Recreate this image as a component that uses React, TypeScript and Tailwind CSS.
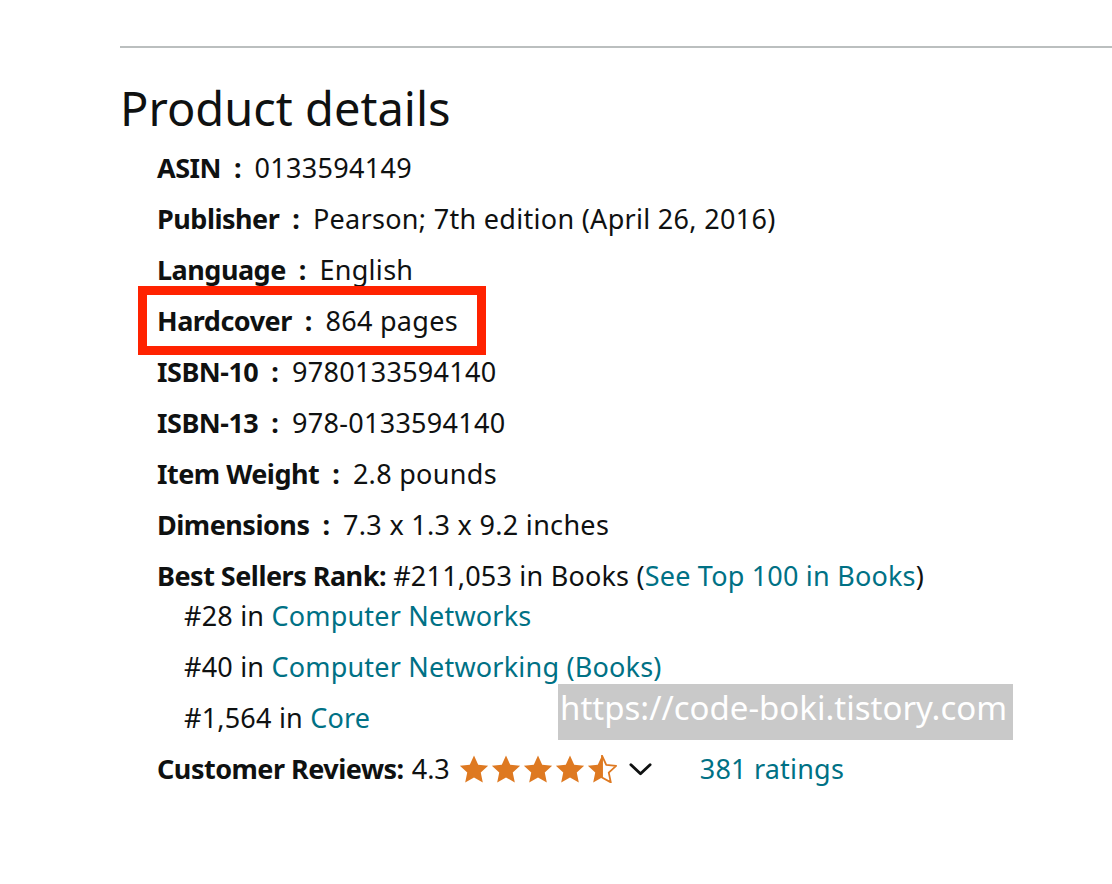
const details: { label: string; value: string }[] = [
  { label: 'ASIN', value: '0133594149' },
  { label: 'Publisher', value: 'Pearson; 7th edition (April 26, 2016)' },
  { label: 'Language', value: 'English' },
  { label: 'Hardcover', value: '864 pages' },
  { label: 'ISBN-10', value: '9780133594140' },
  { label: 'ISBN-13', value: '978-0133594140' },
  { label: 'Item Weight', value: '2.8 pounds' },
  { label: 'Dimensions', value: '7.3 x 1.3 x 9.2 inches' },
];

const ranks = [
  { rank: '#28', name: 'Computer Networks' },
  { rank: '#40', name: 'Computer Networking (Books)' },
  { rank: '#1,564', name: 'Core' },
];

// five-point star, fills the 24x23 box
const STAR = 'M12 0.5l3.5 7.6 8.2.9-6.1 5.6 1.7 8.1L12 18.6l-7.3 4.1 1.7-8.1L0.3 9l8.2-.9z';

function Stars() {
  return (
    <span className="inline-flex items-center gap-[2px] ml-[9px] shrink-0">
      {[0, 1, 2, 3].map(i => (
        <svg key={i} width="30" height="28" viewBox="0 0 24 23.2" className="shrink-0" aria-hidden="true">
          <path d={STAR} fill="#de7921" />
        </svg>
      ))}
      <svg width="30" height="28" viewBox="0 0 24 23.2" className="shrink-0" aria-hidden="true">
        <defs>
          <clipPath id="half-star">
            <rect x="0" y="0" width="12.4" height="24" />
          </clipPath>
        </defs>
        <path d={STAR} fill="#de7921" clipPath="url(#half-star)" />
        <path d="M12 0.5l3.5 7.6 8.2.9-6.1 5.6 1.7 8.1L12 18.6z" fill="none" stroke="#de7921" strokeWidth="1.5" strokeLinejoin="round" />
      </svg>
    </span>
  );
}

function Row({ label, value, boxed }: { label: string; value: string; boxed?: boolean }) {
  return (
    <li className="mb-[11px]">
      <span className={boxed ? 'relative inline-block' : 'inline-block'}>
        <span className="font-bold tracking-[-0.5px]">{label}</span>
        <span className="font-bold mx-[13px]">:</span>
        <span className="tracking-[0.3px]">{value}</span>
        {boxed && (
          <span className="absolute -left-[19px] -right-[28px] -top-[15px] -bottom-[14px] border-[9px] border-[#ff2200]" />
        )}
      </span>
    </li>
  );
}

export default function App() {
  return (
    <div
      className="relative min-h-[884px] bg-white text-[#0f1111] pl-[120px] pt-[46px] overflow-hidden"
      style={{ fontFamily: '"Noto Sans", "Open Sans", Arial, sans-serif' }}
    >
      <div className="h-[2px] bg-[#bbbfbf] -mr-[20px]" />

      <h2 className="text-[47px] leading-[56px] font-normal mt-[32px] mb-[12px]">Product details</h2>

      <ul className="pl-[37px] text-[27px] leading-[40px]">
        {details.map(d => (
          <Row key={d.label} label={d.label} value={d.value} boxed={d.label === 'Hardcover'} />
        ))}
        <li className="mb-[11px] tracking-[0.2px]">
          <span className="font-bold tracking-[-0.5px]">Best Sellers Rank:</span> #211,053 in Books (
          <a className="text-[#007185]">See Top 100 in Books</a>)
          <ul className="pl-[27px]">
            {ranks.map((r, i) => (
              <li key={r.name} className={i < ranks.length - 1 ? 'mb-[11px]' : ''}>
                {r.rank} in <a className="text-[#007185]">{r.name}</a>
              </li>
            ))}
          </ul>
        </li>
        <li className="flex items-center whitespace-nowrap">
          <span className="font-bold tracking-[-0.5px]">Customer Reviews:</span>
          <span className="ml-[8px]">4.3</span>
          <Stars />
          <svg width="23" height="15" viewBox="0 0 24 15" className="ml-[12px] shrink-0" aria-hidden="true">
            <polyline points="2,2.5 12,12 22,2.5" fill="none" stroke="#0f1111" strokeWidth="3" strokeLinecap="round" strokeLinejoin="round" />
          </svg>
          <a className="text-[#007185] ml-[48px] tracking-[0.2px]">381 ratings</a>
        </li>
      </ul>

      <div
        className="absolute left-[558px] top-[684px] w-[455px] h-[56px] bg-[#c9c9c9] text-white text-[33px] leading-[48px] pl-[2px] whitespace-nowrap overflow-hidden"
        style={{ fontFamily: '"Noto Sans", sans-serif' }}
      >
        https://code-boki.tistory.com
      </div>
    </div>
  );
}
